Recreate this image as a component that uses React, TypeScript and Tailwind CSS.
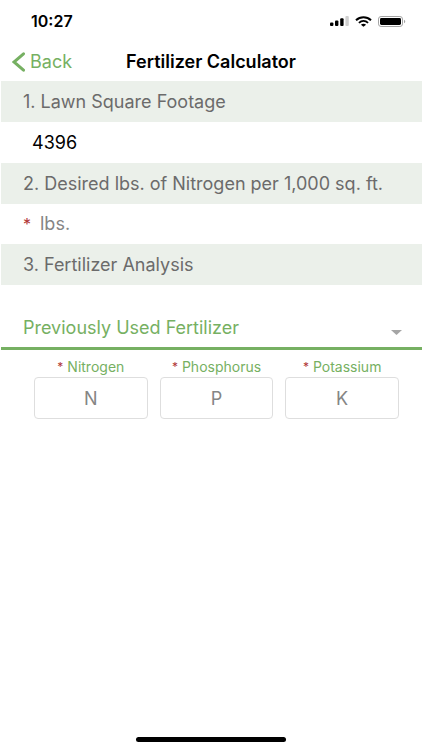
import type { ReactNode } from "react";

const nutrients = [
  { id: "nitrogen", label: "Nitrogen", symbol: "N" },
  { id: "phosphorus", label: "Phosphorus", symbol: "P" },
  { id: "potassium", label: "Potassium", symbol: "K" },
];

function StatusBar() {
  return (
    <div className="flex h-[42px] items-center justify-between pr-4 pl-[31px]">
      <span className="text-[16px] leading-5 font-semibold">10:27</span>
      <div className="flex items-center gap-[6px]">
        <svg width="19" height="10" viewBox="0 0 19 10" aria-label="Signal">
          <rect x="0" y="6.4" width="3.4" height="3.6" rx="1" />
          <rect x="5" y="4.6" width="3.4" height="5.4" rx="1" />
          <rect x="10.2" y="2.2" width="3.4" height="7.8" rx="1" />
          <rect x="15.4" y="0" width="3.4" height="10" rx="1" fill="#d0d0d0" />
        </svg>
        <svg width="17" height="11" viewBox="0 0 17 11" aria-label="Wi-Fi">
          <path d="M1 4.2C5.2.3 11.8.3 16 4.2" fill="none" stroke="#000" strokeWidth="2" />
          <path d="M3.9 6.8c2.7-2.4 6.5-2.4 9.2 0" fill="none" stroke="#000" strokeWidth="1.8" />
          <path d="M8.5 10.8 5.9 8.7c1.5-1.2 3.7-1.2 5.2 0z" />
        </svg>
        <svg width="28" height="11" viewBox="0 0 28 11" aria-label="Battery">
          <rect x=".5" y=".5" width="24" height="10" rx="2.6" fill="none" stroke="#a3a3a3" />
          <rect x="2" y="2" width="21" height="7" rx="1.4" />
          <path d="M26 3.8c1.7.6 1.7 2.8 0 3.4z" fill="#a3a3a3" />
        </svg>
      </div>
    </div>
  );
}

function Band({ children }: { children: ReactNode }) {
  return (
    <h2 className="flex h-[41px] items-center bg-[#ebf0ea] pl-[22px] text-[18px] leading-6 whitespace-nowrap text-[#6b6b6b]">
      {children}
    </h2>
  );
}

export default function App() {
  return (
    <div className="flex min-h-screen flex-col bg-white font-[Inter,'Liberation_Sans',sans-serif] text-black">
      <StatusBar />
      <header className="grid h-[39px] grid-cols-[1fr_auto_1fr] items-center px-3">
        <button type="button" className="flex items-center gap-[5px] text-[18px] leading-6 text-[#76b062]">
          <svg width="13" height="20" viewBox="0 0 13 20" fill="none" stroke="currentColor" strokeWidth="3" aria-hidden="true">
            <path d="M11.5 1.8 2 10l9.5 8.2" strokeLinecap="round" strokeLinejoin="miter" />
          </svg>
          Back
        </button>
        <h1 className="text-[18px] leading-6 font-semibold">Fertilizer Calculator</h1>
      </header>

      <main className="flex-1 border-l border-white">
        <Band>1. Lawn Square Footage</Band>
        <input
          type="text"
          inputMode="numeric"
          aria-label="Lawn Square Footage"
          defaultValue="4396"
          className="block h-[41px] w-full bg-transparent px-[31px] text-[18px] leading-6 outline-none"
        />

        <Band>2. Desired lbs. of Nitrogen per 1,000 sq. ft.</Band>
        <div className="flex h-10 items-center pl-[22px] text-[18px] leading-6">
          <label htmlFor="pounds" className="w-[17px] text-[16px] text-[#b03535]">*</label>
          <input
            id="pounds"
            type="text"
            aria-label="Desired pounds of nitrogen"
            placeholder="lbs."
            className="min-w-0 flex-1 bg-transparent outline-none placeholder:text-[#858585]"
          />
        </div>

        <Band>3. Fertilizer Analysis</Band>
        <div className="flex items-center border-b-3 border-[#76b062] pt-6 pr-5 pl-[22px]">
          <select
            aria-label="Previously Used Fertilizer"
            className="h-[38px] min-w-0 flex-1 appearance-none bg-transparent text-[18px] leading-6 text-[#76b062] outline-none"
          >
            <option>Previously Used Fertilizer</option>
          </select>
          <svg width="11" height="5" viewBox="0 0 11 5" className="mt-2" aria-hidden="true">
            <path d="M0 0h11L5.5 5z" fill="#a5a5a5" />
          </svg>
        </div>

        <div className="grid grid-cols-3 gap-3 pt-[7px] pr-[23px] pl-[33px]">
          {nutrients.map(({ id, label, symbol }) => (
            <div key={id} className="flex flex-col">
              <label htmlFor={id} className="flex items-center justify-center gap-1 text-[14px] leading-5 whitespace-nowrap text-[#76b062]">
                <span className="text-[12px] text-[#b03535]">*</span>
                {label}
              </label>
              <input
                id={id}
                type="text"
                placeholder={symbol}
                className="h-[42px] w-full rounded border border-[#dedede] text-center text-[18px] leading-6 outline-none placeholder:text-[#858585]"
              />
            </div>
          ))}
        </div>
      </main>

      <footer className="flex justify-center pb-2">
        <div className="h-[5px] w-[150px] rounded-full bg-black" />
      </footer>
    </div>
  );
}
